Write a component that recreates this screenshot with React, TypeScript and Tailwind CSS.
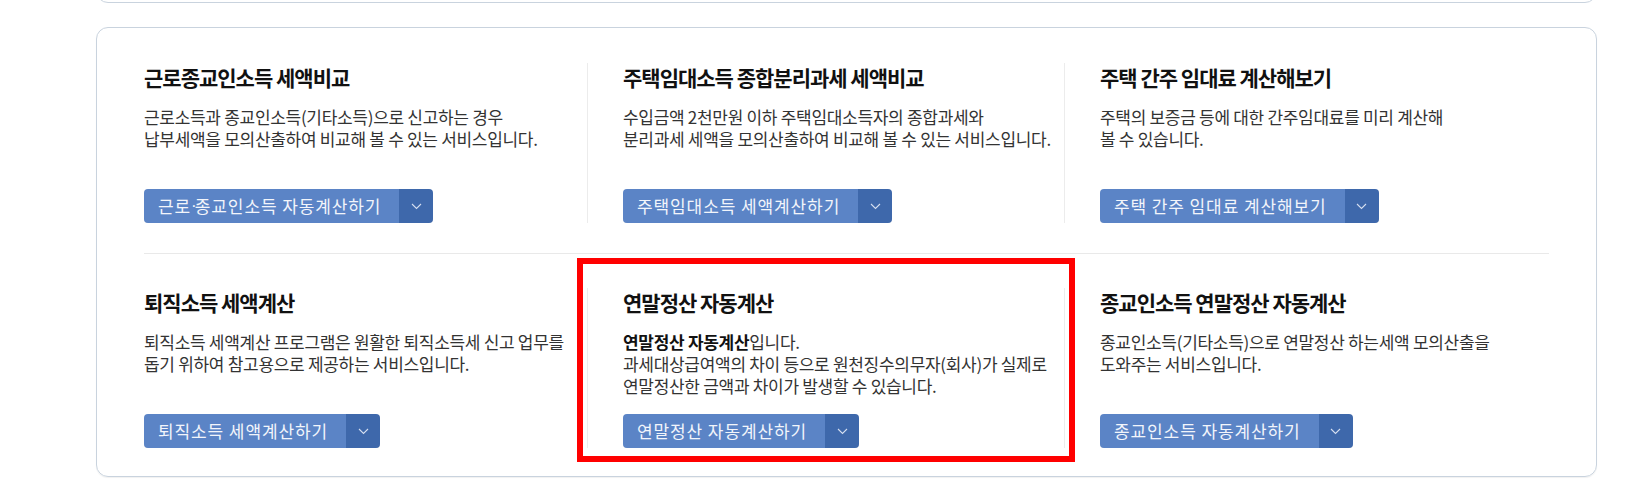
type Item = {
  title: string;
  desc: React.ReactNode;
  button: React.ReactNode;
  marked?: boolean;
};

// the middle dot is taken from a latin font so it stays narrow
const Dot = () => <span className="font-['Liberation_Sans',sans-serif] tracking-[-2px]">·</span>;

const rows: Item[][] = [
  [
    {
      title: "근로종교인소득 세액비교",
      desc: (
        <>
          근로소득과 종교인소득(기타소득)으로 신고하는 경우
          <br />
          납부세액을 모의산출하여 비교해 볼 수 있는 서비스입니다.
        </>
      ),
      button: (
        <>
          근로<Dot />종교인소득 자동계산하기
        </>
      ),
    },
    {
      title: "주택임대소득 종합분리과세 세액비교",
      desc: (
        <>
          수입금액 2천만원 이하 주택임대소득자의 종합과세와
          <br />
          분리과세 세액을 모의산출하여 비교해 볼 수 있는 서비스입니다.
        </>
      ),
      button: "주택임대소득 세액계산하기",
    },
    {
      title: "주택 간주 임대료 계산해보기",
      desc: (
        <>
          주택의 보증금 등에 대한 간주임대료를 미리 계산해
          <br />볼 수 있습니다.
        </>
      ),
      button: "주택 간주 임대료 계산해보기",
    },
  ],
  [
    {
      title: "퇴직소득 세액계산",
      desc: (
        <>
          퇴직소득 세액계산 프로그램은 원활한 퇴직소득세 신고 업무를
          <br />
          돕기 위하여 참고용으로 제공하는 서비스입니다.
        </>
      ),
      button: "퇴직소득 세액계산하기",
    },
    {
      title: "연말정산 자동계산",
      desc: (
        <>
          <strong className="font-bold text-[#111]">연말정산 자동계산</strong>입니다.
          <br />
          과세대상급여액의 차이 등으로 원천징수의무자(회사)가 실제로
          <br />
          연말정산한 금액과 차이가 발생할 수 있습니다.
        </>
      ),
      button: "연말정산 자동계산하기",
      marked: true,
    },
    {
      title: "종교인소득 연말정산 자동계산",
      desc: (
        <>
          종교인소득(기타소득)으로 연말정산 하는세액 모의산출을
          <br />
          도와주는 서비스입니다.
        </>
      ),
      button: "종교인소득 자동계산하기",
    },
  ],
];

function CalcButton({ label }: { label: React.ReactNode }) {
  return (
    <div className="flex h-[34px] w-fit overflow-hidden rounded-[4px] shadow-[inset_0_-2px_0_rgba(0,0,0,0.12)]">
      <button className="flex items-center bg-[#5b84c6] pl-[14px] pr-[18px] text-[17px] tracking-[0.9px] text-[#f2f5fb]">
        {label}
      </button>
      <span className="flex w-[34px] items-center justify-center bg-[#3e68ab]">
        <svg width="11" height="7" viewBox="0 0 11 7" fill="none">
          <polyline points="1,1 5.5,5.5 10,1" stroke="#d3ddef" strokeWidth="1.1" />
        </svg>
      </span>
    </div>
  );
}

function Column({ item, first }: { item: Item; first: boolean }) {
  return (
    <div
      className={
        first
          ? "relative flex flex-col"
          : "relative flex flex-col border-l border-[#ececec] pl-[35px]"
      }
    >
      <h3 className="text-[21px] font-bold leading-[28px] tracking-[-1px] text-[#111]">
        {item.title}
      </h3>
      <p className="mt-[15px] min-h-[66px] text-[17px] leading-[22px] tracking-[-0.3px] text-[#333]">
        {item.desc}
      </p>
      <div className="mt-[17px]">
        <CalcButton label={item.button} />
      </div>
      {item.marked && (
        <div className="pointer-events-none absolute -top-[30px] -right-[11px] -bottom-[14px] -left-[11px] border-[6px] border-[#ff0000]" />
      )}
    </div>
  );
}

export default function App() {
  return (
    <div className="min-h-[490px] overflow-hidden bg-white font-['Noto_Sans_CJK_KR','Noto_Sans',sans-serif]">
      <div className="-mt-[47px] ml-[96px] h-[50px] w-[1501px] rounded-[12px] border border-[#c9d3de]" />

      <section className="ml-[96px] mt-[24px] w-[1501px] rounded-[12px] border border-[#c9d3de] px-[47px] pt-[35px] pb-[28px] shadow-[0_1px_1px_rgba(0,0,0,0.06)]">
        {rows.map((row, r) => (
          <div key={r}>
            {r > 0 && <div className="mt-[30px] mb-[34px] h-px bg-[#e9e9e9]" />}
            <div className="grid grid-cols-[443px_477px_1fr]">
              {row.map((item, i) => (
                <Column key={i} item={item} first={i === 0} />
              ))}
            </div>
          </div>
        ))}
      </section>
    </div>
  );
}
